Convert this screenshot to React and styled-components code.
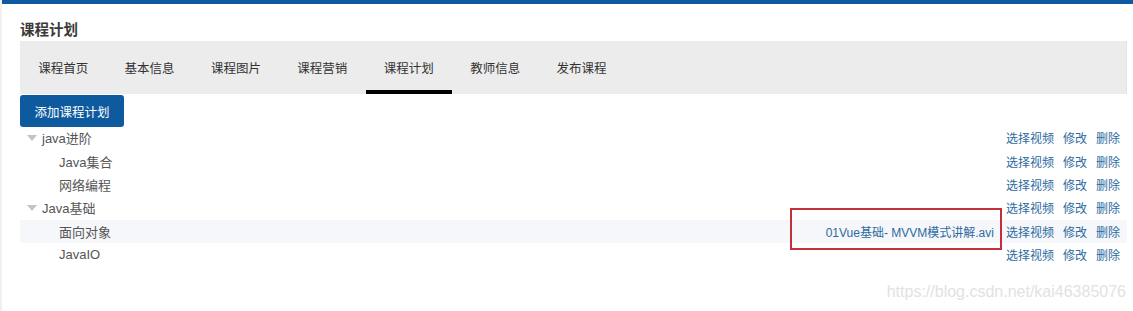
import React from 'react';
import styled, { createGlobalStyle } from 'styled-components';

const GlobalStyle = createGlobalStyle`
  html, body {
    margin: 0;
    padding: 0;
    background: #fff;
    font-family: "Liberation Sans", "Noto Sans CJK SC", sans-serif;
  }
`;

const Page = styled.div`
  position: relative;
  width: 1133px;
  height: 311px;
  overflow: hidden;
  background: #fff;
  border-left: 2px solid #f0f0f0;
  box-sizing: border-box;
`;

const TopBar = styled.div`
  height: 4px;
  background: #0d5aa0;
`;

const Content = styled.div`
  padding: 0 6px 0 18px;
`;

const Title = styled.div`
  height: 37px;
  display: flex;
  align-items: center;
  box-sizing: border-box;
  padding-top: 15px;
  font-size: 14.5px;
  font-weight: bold;
  color: #3a3a3a;
  line-height: 1;
`;

const TabBar = styled.div`
  display: flex;
  height: 53px;
  background: #ececec;
  border-right: 1px solid #e4e4e4;
`;

const Tab = styled.div`
  width: 86.4px;
  box-sizing: border-box;
  display: flex;
  align-items: center;
  justify-content: center;
  font-size: 12.5px;
  color: #333;
  border-bottom: 4px solid ${({ active }) => (active ? '#000' : 'transparent')};
  padding-top: 4px;
`;

const AddButton = styled.button`
  display: block;
  margin-top: 1px;
  height: 32px;
  width: 104px;
  border: none;
  border-radius: 3px;
  background: #0e5a9e;
  color: #fff;
  font-family: "Noto Sans CJK SC", sans-serif;
  font-size: 12.5px;
  padding: 0;
  cursor: pointer;
`;

const Tree = styled.div`
  display: flex;
  flex-direction: column;
  margin-top: -1px;
`;

const Row = styled.div`
  height: 23.4px;
  display: flex;
  align-items: center;
  padding-right: 7px;
  padding-left: ${({ level }) => (level === 1 ? 7 : 39)}px;
  background: ${({ hover }) => (hover ? '#f5f7fa' : 'transparent')};
  font-size: 13px;
  color: #555;
`;

const Caret = styled.span`
  width: 0;
  height: 0;
  border-left: 5.5px solid transparent;
  border-right: 5.5px solid transparent;
  border-top: 6px solid #c0c4cc;
  margin-right: 5px;
  margin-top: 1px;
`;

const Label = styled.span`
  flex: 1;
`;

const FileName = styled.span`
  font-size: 12px;
  color: #2d6aa0;
  margin-right: 12px;
`;

const Actions = styled.div`
  display: flex;
  gap: 9px;
`;

const Link = styled.a`
  font-size: 12px;
  color: #2d6aa0;
  text-decoration: none;
  cursor: pointer;
`;

const Annotation = styled.div`
  position: absolute;
  left: 788px;
  top: 208px;
  width: 212px;
  height: 42px;
  border: 2px solid #c4303a;
  box-sizing: border-box;
  pointer-events: none;
`;

const Watermark = styled.div`
  position: absolute;
  right: 7px;
  top: 283px;
  font-size: 16px;
  color: #e2e2e2;
  font-family: "Liberation Sans", sans-serif;
`;

const tabs = ['课程首页', '基本信息', '课程图片', '课程营销', '课程计划', '教师信息', '发布课程'];

const nodes = [
  { label: 'java进阶', level: 1 },
  { label: 'Java集合', level: 2 },
  { label: '网络编程', level: 2 },
  { label: 'Java基础', level: 1 },
  { label: '面向对象', level: 2, hover: true, file: '01Vue基础- MVVM模式讲解.avi' },
  { label: 'JavaIO', level: 2 },
];

export default function App() {
  return (
    <Page>
      <GlobalStyle />
      <TopBar />
      <Content>
        <Title>课程计划</Title>
        <TabBar>
          {tabs.map((t) => (
            <Tab key={t} active={t === '课程计划'}>{t}</Tab>
          ))}
        </TabBar>
        <AddButton>添加课程计划</AddButton>
        <Tree>
          {nodes.map((n) => (
            <Row key={n.label} level={n.level} hover={n.hover}>
              {n.level === 1 && <Caret />}
              <Label>{n.label}</Label>
              {n.file && <FileName>{n.file}</FileName>}
              <Actions>
                <Link>选择视频</Link>
                <Link>修改</Link>
                <Link>删除</Link>
              </Actions>
            </Row>
          ))}
        </Tree>
      </Content>
      <Annotation />
      <Watermark>https://blog.csdn.net/kai46385076</Watermark>
    </Page>
  );
}
